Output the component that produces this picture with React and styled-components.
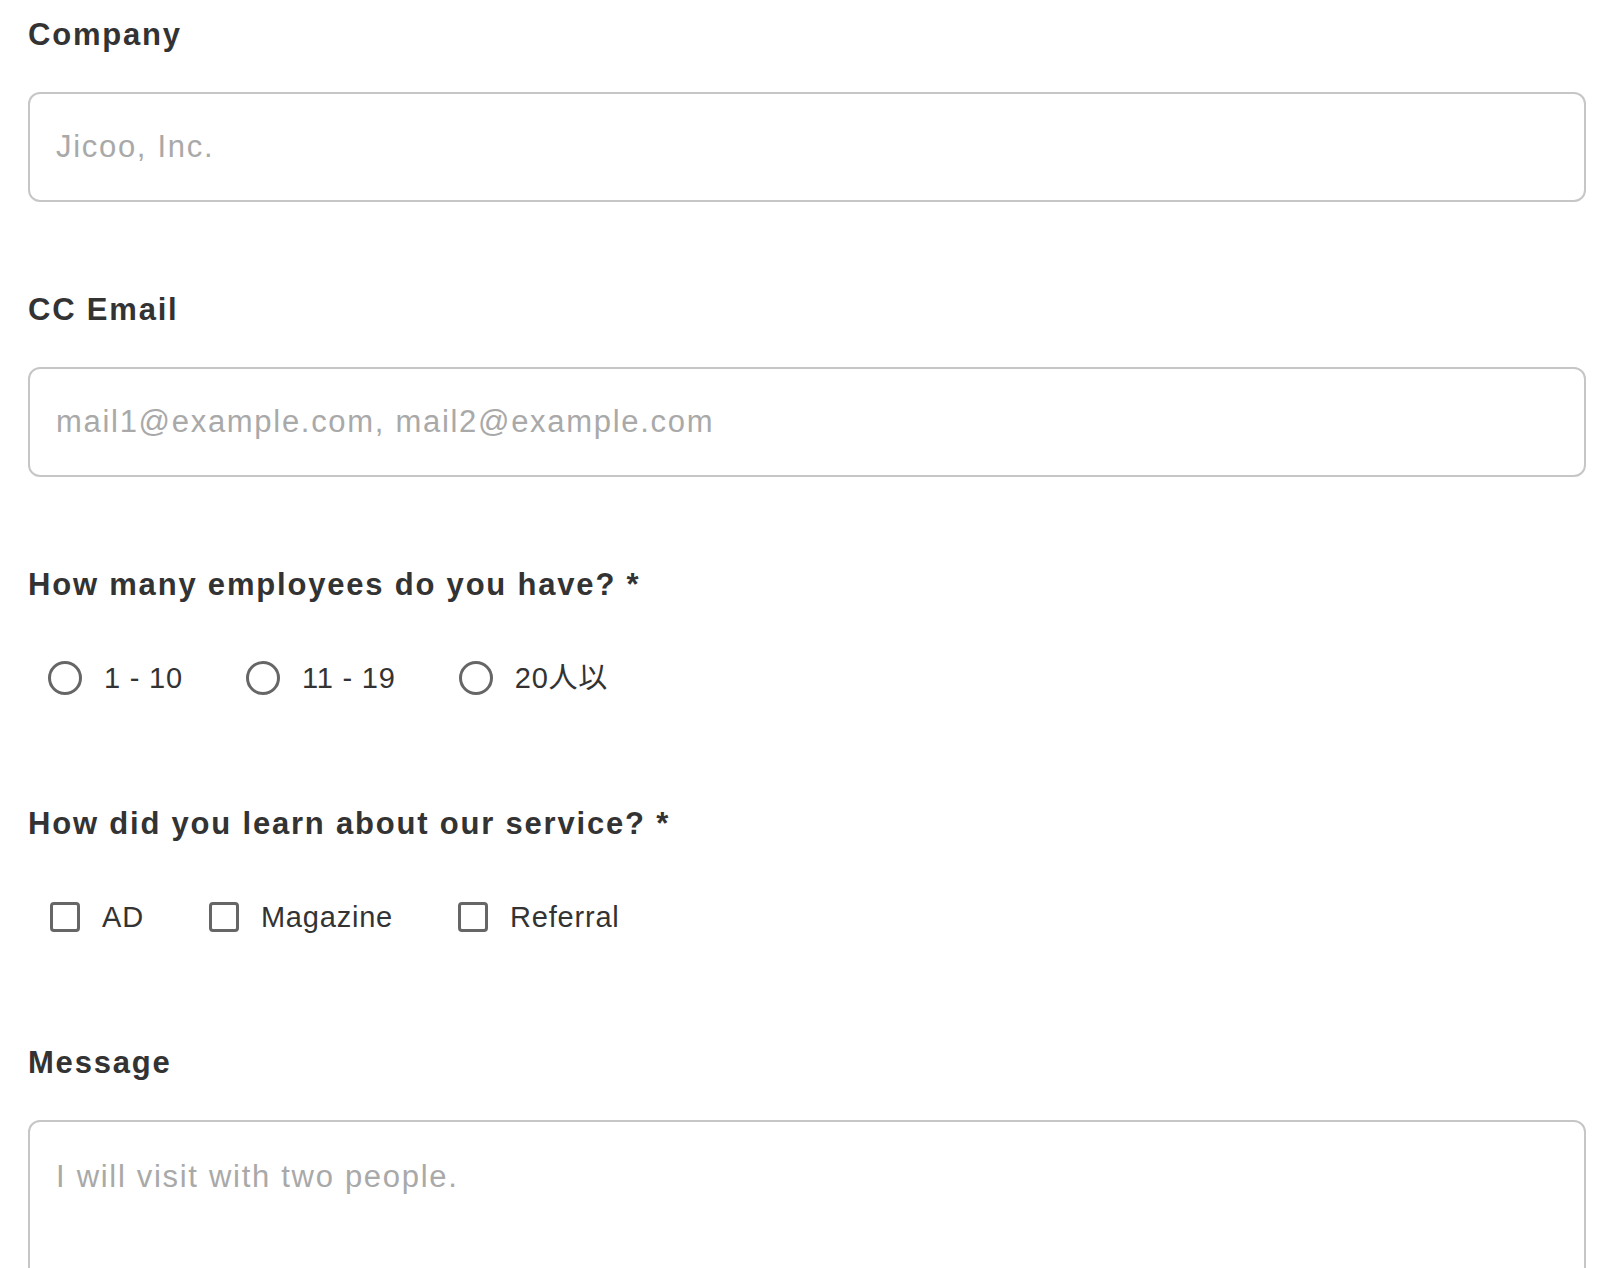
import React from "react";
import styled, { createGlobalStyle } from "styled-components";

const GlobalStyle = createGlobalStyle`
  html, body {
    margin: 0;
    padding: 0;
    background: #fff;
  }
  body {
    font-family: "Liberation Sans", Arial, "Noto Sans CJK JP", sans-serif;
    color: #333;
  }
  * {
    box-sizing: border-box;
  }
`;

const employeeOptions = ["1 - 10", "11 - 19", "20人以"];
const sourceOptions = ["AD", "Magazine", "Referral"];

function App() {
  return (
    <>
      <GlobalStyle />
      <Form>
        <Field>
          <Label>Company</Label>
          <TextInput placeholder="Jicoo, Inc." />
        </Field>
        <Field>
          <Label>CC Email</Label>
          <TextInput placeholder="mail1@example.com, mail2@example.com" />
        </Field>
        <ChoiceField>
          <Label>How many employees do you have? *</Label>
          <OptionRow>
            {employeeOptions.map((opt) => (
              <Option key={opt}>
                <Radio type="radio" name="employees" />
                <OptionText>{opt}</OptionText>
              </Option>
            ))}
          </OptionRow>
        </ChoiceField>
        <ChoiceField>
          <Label>How did you learn about our service? *</Label>
          <OptionRow>
            {sourceOptions.map((opt) => (
              <Option key={opt}>
                <Checkbox type="checkbox" />
                <OptionText>{opt}</OptionText>
              </Option>
            ))}
          </OptionRow>
        </ChoiceField>
        <Field>
          <Label>Message</Label>
          <TextArea placeholder="I will visit with two people." />
        </Field>
      </Form>
    </>
  );
}

const Form = styled.form`
  display: flex;
  flex-direction: column;
  padding: 15px 32px 0 28px;
  height: 1268px;
  overflow: hidden;
`;

const Field = styled.div`
  display: flex;
  flex-direction: column;
  margin-bottom: 88px;
`;

const ChoiceField = styled.div`
  display: flex;
  flex-direction: column;
  margin-bottom: 106px;
`;

const Label = styled.label`
  display: block;
  font-size: 31px;
  line-height: 40px;
  font-weight: 700;
  letter-spacing: 1.8px;
  color: #333;
  margin-bottom: 37px;
`;

const TextInput = styled.input`
  width: 100%;
  height: 110px;
  border: 2px solid #c6c6c6;
  border-radius: 12px;
  padding: 0 26px;
  font-family: inherit;
  font-size: 31px;
  letter-spacing: 1.7px;
  color: #333;
  outline: none;
  &::placeholder {
    color: #a9a9a9;
  }
`;

const TextArea = styled.textarea`
  width: 100%;
  height: 320px;
  border: 2px solid #c6c6c6;
  border-radius: 12px;
  padding: 34px 26px;
  font-family: inherit;
  font-size: 31px;
  line-height: 42px;
  letter-spacing: 1.7px;
  color: #333;
  resize: none;
  outline: none;
  &::placeholder {
    color: #a9a9a9;
  }
`;

const OptionRow = styled.div`
  display: flex;
  align-items: center;
  gap: 63px;
  height: 40px;
  margin-top: 16px;
  padding-left: 20px;
`;

const Option = styled.label`
  display: flex;
  align-items: center;
  gap: 22px;
  cursor: pointer;
`;

const Radio = styled.input`
  appearance: none;
  margin: 0;
  width: 34px;
  height: 34px;
  border: 3px solid #666;
  border-radius: 50%;
  background: #fff;
  flex-shrink: 0;
`;

const Checkbox = styled.input`
  appearance: none;
  margin: 0 0 0 2px;
  width: 30px;
  height: 30px;
  border: 3px solid #666;
  border-radius: 4px;
  background: #fff;
  flex-shrink: 0;
`;

const OptionText = styled.span`
  font-size: 29px;
  letter-spacing: 0.8px;
  color: #333;
  line-height: 40px;
`;

export default App;
